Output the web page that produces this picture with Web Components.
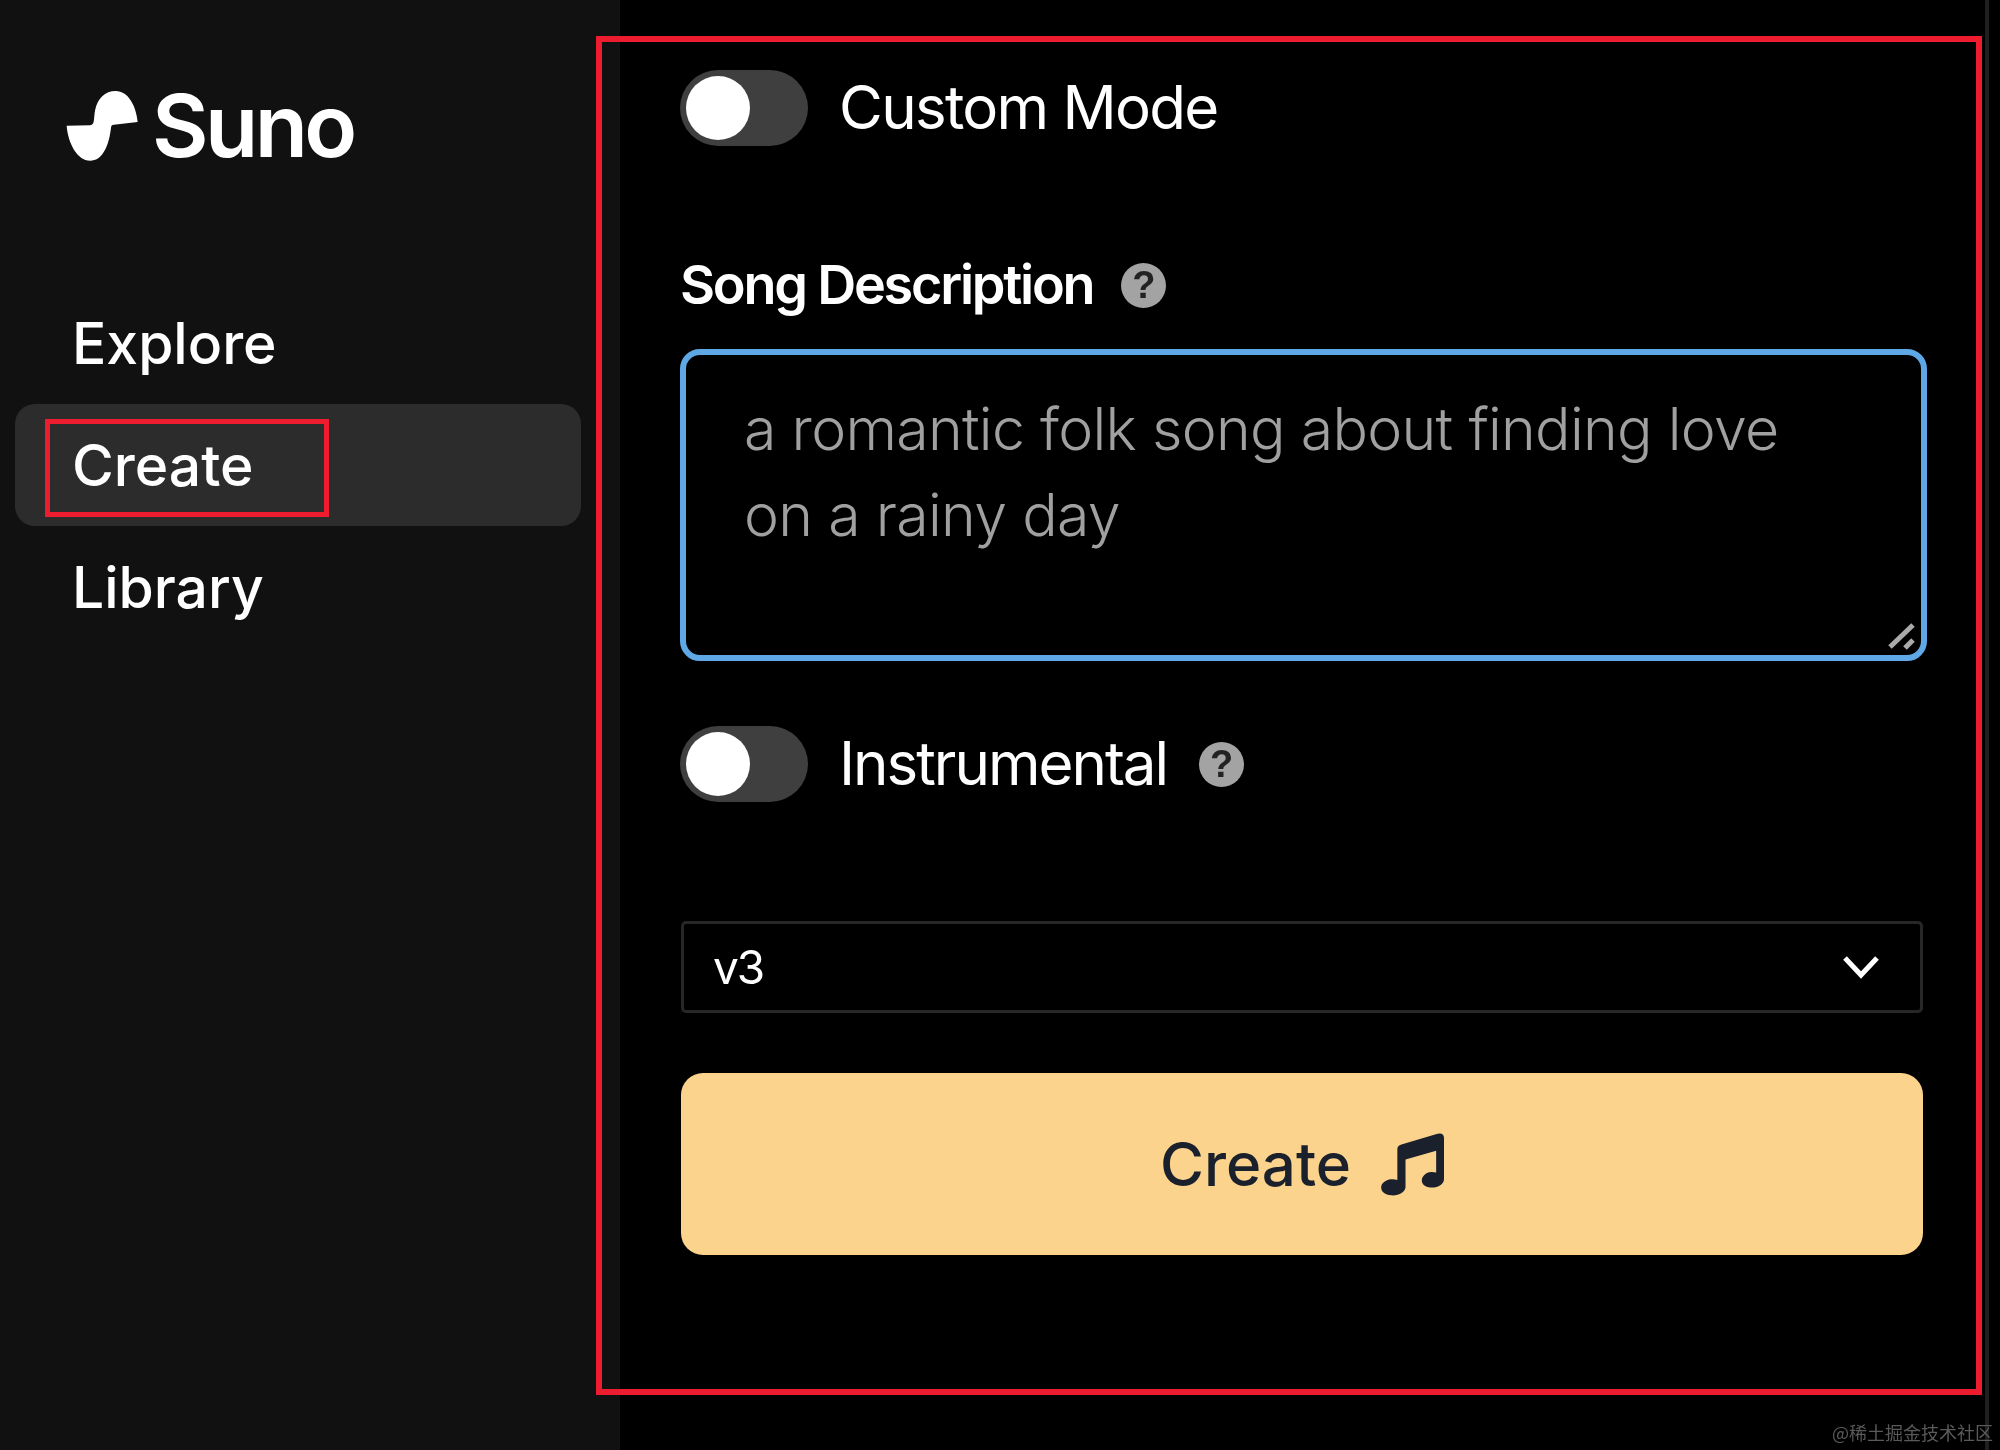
<!DOCTYPE html>
<html><head><meta charset="utf-8"><style>
html,body{margin:0;padding:0;background:#000;}
body{font-family:Inter,"Noto Sans CJK SC",sans-serif;color:#fff;width:2000px;height:1450px;overflow:hidden;position:relative;}
suno-app,suno-annotation{filter:blur(.6px)}
</style></head><body>
<suno-app>
  <suno-sidebar slot="side">
    <suno-logo></suno-logo>
    <suno-nav-item>Explore</suno-nav-item>
    <suno-nav-item active marked>Create</suno-nav-item>
    <suno-nav-item>Library</suno-nav-item>
  </suno-sidebar>
  <suno-panel>
    <suno-switch style="margin-bottom:104px">Custom Mode</suno-switch>
    <suno-label>Song Description</suno-label>
    <suno-textbox>a romantic folk song about finding love on a rainy day</suno-textbox>
    <suno-switch help style="margin-top:65px;margin-bottom:119px;letter-spacing:-2px">Instrumental</suno-switch>
    <suno-select>v3</suno-select>
    <suno-button>Create</suno-button>
  </suno-panel>
</suno-app>
<suno-annotation></suno-annotation>
<suno-watermark>@稀土掘金技术社区</suno-watermark>
<script>
function def(name, html, init){
  customElements.define(name, class extends HTMLElement{
    constructor(){super();const r=this.attachShadow({mode:'open'});r.innerHTML=html;if(init)init(this,r);}
  });
}
const HELP='<suno-help></suno-help>';
def('suno-help',`<style>:host{display:inline-flex;align-items:center;justify-content:center;width:45px;height:45px;border-radius:50%;background:#a3a3a3;color:#222;font:800 38px/1 "Liberation Sans",sans-serif;flex:none}</style>?`);
def('suno-app',`<style>:host{display:flex;width:2000px;height:1450px;align-items:stretch}
.line{width:4px;background:#1f1f1f;margin-left:auto;margin-right:11px}</style><slot name="side"></slot><slot></slot><div class="line"></div>`);
def('suno-sidebar',`<style>:host{display:flex;flex-direction:column;box-sizing:border-box;width:620px;flex:none;background:#111;padding:90px 39px 0 15px}</style><slot></slot>`);
def('suno-logo',`<style>:host{display:flex;align-items:center;gap:14px;padding-left:51px;height:72px;margin-bottom:120px}
span{font:600 87px/72px Inter,sans-serif;letter-spacing:-3.6px;color:#fff}
svg{width:72px;height:72px;display:block;flex:none}</style>
<svg viewBox="76 90 220 218"><path fill="#fff" d="M78 198 L150 197 C165 195 160 175 165 150 C172 115 195 92 228 92 C265 92 290 135 295 187 L222 195 C212 197 215 200 212 215 C205 265 185 305 150 305 C110 305 82 250 78 198 Z"/></svg><span>Suno</span>`);
def('suno-nav-item',`<style>:host{display:flex;align-items:center;position:relative;height:122px;box-sizing:border-box;padding-left:57px;border-radius:20px;font:500 57px/1 Inter,sans-serif;color:#fff}
:host([active]){background:#2c2c2c}
:host([marked])::after{content:"";position:absolute;left:30px;top:15px;width:284px;height:98px;box-sizing:border-box;border:5px solid #ed1c2e}
</style><slot></slot>`);
def('suno-panel',`<style>:host{display:flex;flex-direction:column;box-sizing:border-box;width:1303px;padding:70px 0 0 60px;flex:none}</style><slot></slot>`);
def('suno-switch',`<style>:host{display:flex;align-items:center;height:76px;font:400 60px/1 Inter,sans-serif;letter-spacing:-1.7px;color:#fff}
.t{position:relative;width:128px;height:76px;border-radius:38px;background:#3f3f3f;margin-right:31px;flex:none}
.k{position:absolute;left:6px;top:6px;width:64px;height:64px;border-radius:50%;background:#fff}
span{margin-top:-2px}
suno-help{margin-left:32px;letter-spacing:0}</style><div class="t"><div class="k"></div></div><span><slot></slot></span>`,
(h,r)=>{if(h.hasAttribute('help')) r.appendChild(document.createElement('suno-help'));});
def('suno-label',`<style>:host{display:flex;align-items:center;height:70px;font:600 54px/1 Inter,sans-serif;letter-spacing:-2.25px;color:#fff;gap:28px;margin-bottom:29px}
suno-help{letter-spacing:0}</style><span><slot></slot></span>${HELP}`);
def('suno-textbox',`<style>:host{display:block;position:relative;box-sizing:border-box;width:1247px;height:312px;border:6px solid #5fa8e6;border-radius:20px;padding:31px 100px 31px 58px;font:300 59px/86px Inter,sans-serif;letter-spacing:-.7px;color:#a0a0a0}
svg{position:absolute;right:4px;bottom:4px;width:30px;height:30px}</style><slot></slot>
<svg viewBox="0 0 30 30"><path d="M3 26 L26 4 M18 27 L26 19" stroke="#aaa" stroke-width="5" fill="none"/></svg>`);
def('suno-select',`<style>:host{display:flex;align-items:center;box-sizing:border-box;width:1242px;margin-left:1px;height:92px;border:3px solid #272727;border-radius:5px;padding:0 40px 0 29px;font:400 46px/1 Inter,sans-serif;letter-spacing:-2px;color:#fff;justify-content:space-between;margin-bottom:60px}
svg{width:38px;height:24px}</style><span><slot></slot></span>
<svg viewBox="0 0 38 24"><path d="M3 3 L19 20 L35 3" fill="none" stroke="#fff" stroke-width="5"/></svg>`);
def('suno-button',`<style>:host{display:flex;align-items:center;justify-content:center;gap:30px;box-sizing:border-box;width:1242px;margin-left:1px;height:182px;border-radius:22px;background:#fbd38d;color:#1a202c;font:500 60px/1 Inter,sans-serif}
svg{width:63px;height:63px;display:block}</style><span><slot></slot></span>
<svg viewBox="840 220 185 185"><path fill="#1a202c" d="M888 268 Q888 257 900 254 L1006 222 Q1025 218 1025 235 L1025 355 C1025 372 1005 382 985 380 C965 378 955 365 962 350 C970 335 985 332 1002 336 L1002 272 L912 298 L912 378 C912 395 890 405 870 403 C848 401 836 388 842 372 C850 358 870 352 888 358 Z"/></svg>`);
def('suno-annotation',`<style>:host{position:absolute;left:596px;top:36px;width:1386px;height:1359px;box-sizing:border-box;border:6px solid #ed1c2e;pointer-events:none}</style>`);
def('suno-watermark',`<style>:host{position:absolute;left:1832px;top:1420px;font:400 18px/24px "Noto Sans CJK SC",sans-serif;color:#5a5a5a;white-space:nowrap}</style><slot></slot>`);
</script>
</body></html>
